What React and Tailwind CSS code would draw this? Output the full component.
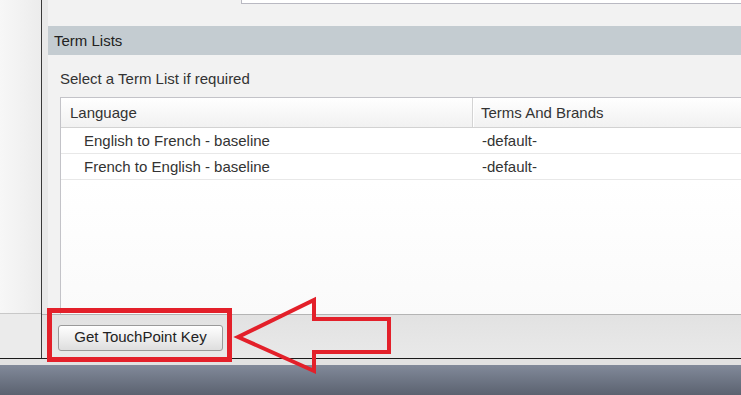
export default function App() {
  const font = { fontFamily: '"Liberation Sans", Arial, sans-serif' };
  return (
    <div className="relative w-[741px] h-[395px] overflow-hidden flex flex-col bg-[#f2f2f2]" style={font}>
      <div className="flex flex-row h-[358px]">
        {/* left sidebar */}
        <div className="w-[41px] flex flex-col">
          <div className="h-[314px] border-b border-[#c8c8c8] bg-gradient-to-r from-[#f7f7f7] to-[#ececec]" />
          <div className="flex-1 bg-[#ebebeb]" />
        </div>
        <div className="w-px bg-[#3a3a3a]" />
        {/* main */}
        <div className="flex-1 flex flex-col min-w-0">
          <div className="flex flex-row h-[314px]">
            <div className="w-[6px] bg-[#e9e9e9]" />
            <div className="flex-1 flex flex-col min-w-0">
              <div className="h-[26px] flex flex-row">
                <div className="w-[193px]" />
                <div className="flex-1 h-[4px] bg-white border-b border-l border-[#b9b9c2]" />
              </div>
              <div className="h-[29px] bg-[#c4ccd1] flex items-center pl-[6px] pt-[1px] text-[15px] text-[#222]">Term Lists</div>
              <div className="flex-1 flex flex-col pl-[12px] min-h-0">
                <div className="h-[42px] flex items-center text-[15px] text-[#333] pt-[6px]">Select a Term List if required</div>
                <div className="flex-1 flex flex-col bg-white border-t border-l border-[#c3c3c8]">
                  <div className="h-[30px] flex flex-row border-b border-[#d2d2d2] bg-gradient-to-b from-[#ffffff] to-[#f1f1f1] text-[15px] text-[#333]">
                    <div className="w-[412px] flex items-center pl-[9px] pt-[2px] border-r border-[#d4d4d4] shadow-[1px_0_0_#ffffff]">Language</div>
                    <div className="flex-1 flex items-center pl-[8px] pt-[2px]">Terms And Brands</div>
                  </div>
                  {[
                    ['English to French - baseline', '-default-'],
                    ['French to English - baseline', '-default-'],
                  ].map(([a, b]) => (
                    <div key={a} className="h-[26px] flex flex-row border-b border-[#e8e8e8] text-[15px] text-[#333] pt-[1px]">
                      <div className="w-[413px] flex items-center pl-[23px]">{a}</div>
                      <div className="flex-1 flex items-center pl-[8px]">{b}</div>
                    </div>
                  ))}
                  <div className="flex-1 bg-gradient-to-b from-white to-[#fafafa]" />
                </div>
              </div>
            </div>
          </div>
          {/* toolbar */}
          <div className="flex-1 border-t border-[#b4b4b4] bg-gradient-to-b from-[#e2e2e2] to-[#e9e9e9] flex items-center pl-[16px] pt-[2px]">
            <button className="w-[165px] h-[26px] rounded-[3px] border border-[#9a9a9a] bg-gradient-to-b from-[#ffffff] to-[#dedede] text-[15px] text-[#222] flex items-center justify-center shadow-[inset_0_1px_0_#ffffff]" style={font}>
              Get TouchPoint Key
            </button>
          </div>
        </div>
      </div>
      <div className="h-px bg-[#1a1a1a]" />
      <div className="h-[6px] bg-[#e2e2e2]" />
      <div className="flex-1 bg-gradient-to-b from-[#828a9a] to-[#5b6270]" />

      {/* red highlight overlays */}
      <div className="absolute left-[47px] top-[308px] w-[185px] h-[54px] border-[5px] border-[#e3202a]" />
      <svg className="absolute left-0 top-0" width="741" height="395" viewBox="0 0 741 395">
        <polygon
          points="238,337 314,300 314,319 389,319 389,352 314,352 314,371"
          fill="none"
          stroke="#e3202a"
          strokeWidth="4"
          strokeLinejoin="miter"
        />
      </svg>
    </div>
  );
}
